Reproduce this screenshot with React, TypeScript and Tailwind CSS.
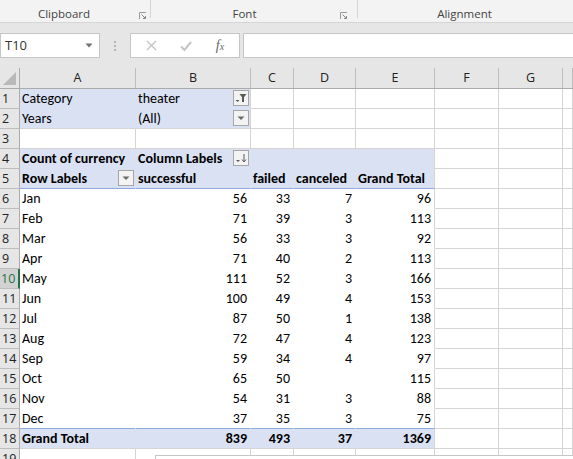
import React from "react";

const BLUE = "bg-[#d9e1f2]";
const WHITE = "bg-white";
const BR_GRID = "border-r-[#d4d4d4]";
const BR_BLUE = "border-r-[#d9e1f2]";
const BR_WHITE = "border-r-white";
const BB_GRID = "border-b-[#d4d4d4]";
const BB_BLUE = "border-b-[#d9e1f2]";
const BB_WHITE = "border-b-white";
const BB_LINE = "border-b-[#8ea9db]";

const W = ["w-[116px]", "w-[115px]", "w-[43px]", "w-[62px]", "w-[79px]", "w-[64px]", "w-[64px]", "flex-1"];
const LETTERS = ["A", "B", "C", "D", "E", "F", "G", ""];

type CellSpec = {
  text?: string;
  bold?: boolean;
  right?: boolean;
  bg?: string;
  br?: string;
  bb?: string;
  btn?: React.ReactNode;
};

const Btn = ({ children }: { children: React.ReactNode }) => (
  <div className="absolute right-[1px] top-[1px] w-[16px] h-[16px] border border-[#a6a6a6] bg-[#f3f3f3] flex items-center justify-center">
    {children}
  </div>
);

const FilterIcon = () => (
  <Btn>
    <svg width="14" height="14" viewBox="0 0 14 14">
      <path d="M1.5 9h4l-2 2z" fill="#595959" />
      <path d="M5.5 3h7l-2.5 3.2V11H8V6.2z" fill="#595959" />
    </svg>
  </Btn>
);

const DropIcon = () => (
  <Btn>
    <svg width="14" height="14" viewBox="0 0 14 14">
      <path d="M3.5 5.5h7l-3.5 3.5z" fill="#6b6b6b" />
    </svg>
  </Btn>
);

const SortIcon = () => (
  <Btn>
    <svg width="14" height="14" viewBox="0 0 14 14">
      <path d="M2 9h4l-2 2z" fill="#595959" />
      <path d="M10 3v8" stroke="#595959" strokeWidth="1" />
      <path d="M8 8.5l2 2.5 2-2.5" stroke="#595959" strokeWidth="1" fill="none" />
    </svg>
  </Btn>
);

const normal = (): CellSpec => ({});

const months: [string, number, number, number | null, number][] = [
  ["Jan", 56, 33, 7, 96],
  ["Feb", 71, 39, 3, 113],
  ["Mar", 56, 33, 3, 92],
  ["Apr", 71, 40, 2, 113],
  ["May", 111, 52, 3, 166],
  ["Jun", 100, 49, 4, 153],
  ["Jul", 87, 50, 1, 138],
  ["Aug", 72, 47, 4, 123],
  ["Sep", 59, 34, 4, 97],
  ["Oct", 65, 50, null, 115],
  ["Nov", 54, 31, 3, 88],
  ["Dec", 37, 35, 3, 75],
];

function buildRows(): CellSpec[][] {
  const rows: CellSpec[][] = [];
  const rest = (n: number) => Array.from({ length: n }, normal);
  rows.push([
    { text: "Category", bg: BLUE, br: BR_BLUE, bb: BB_BLUE },
    { text: "theater", bg: BLUE, br: BR_GRID, bb: BB_BLUE, btn: <FilterIcon /> },
    ...rest(6),
  ]);
  rows.push([
    { text: "Years", bg: BLUE, br: BR_BLUE, bb: BB_GRID },
    { text: "(All)", bg: BLUE, br: BR_GRID, bb: BB_GRID, btn: <DropIcon /> },
    ...rest(6),
  ]);
  rows.push(rest(8));
  rows.push([
    { text: "Count of currency", bold: true, bg: BLUE, br: BR_BLUE, bb: BB_BLUE },
    { text: "Column Labels", bold: true, bg: BLUE, br: BR_BLUE, bb: BB_BLUE, btn: <SortIcon /> },
    { bg: BLUE, br: BR_BLUE, bb: BB_BLUE },
    { bg: BLUE, br: BR_BLUE, bb: BB_BLUE },
    { bg: BLUE, br: BR_GRID, bb: BB_BLUE },
    ...rest(3),
  ]);
  rows.push([
    { text: "Row Labels", bold: true, bg: BLUE, br: BR_BLUE, bb: BB_LINE, btn: <DropIcon /> },
    { text: "successful", bold: true, bg: BLUE, br: BR_BLUE, bb: BB_LINE },
    { text: "failed", bold: true, bg: BLUE, br: BR_BLUE, bb: BB_LINE },
    { text: "canceled", bold: true, bg: BLUE, br: BR_BLUE, bb: BB_LINE },
    { text: "Grand Total", bold: true, bg: BLUE, br: BR_GRID, bb: BB_LINE },
    ...rest(3),
  ]);
  months.forEach(([m, s, f, c, t], i) => {
    const bb = i === months.length - 1 ? BB_LINE : BB_WHITE;
    rows.push([
      { text: m, bg: WHITE, br: BR_WHITE, bb },
      { text: String(s), right: true, bg: WHITE, br: BR_WHITE, bb },
      { text: String(f), right: true, bg: WHITE, br: BR_WHITE, bb },
      { text: c === null ? "" : String(c), right: true, bg: WHITE, br: BR_WHITE, bb },
      { text: String(t), right: true, bg: WHITE, br: BR_GRID, bb },
      ...rest(3),
    ]);
  });
  rows.push([
    { text: "Grand Total", bold: true, bg: BLUE, br: BR_BLUE, bb: BB_GRID },
    { text: "839", bold: true, right: true, bg: BLUE, br: BR_BLUE, bb: BB_GRID },
    { text: "493", bold: true, right: true, bg: BLUE, br: BR_BLUE, bb: BB_GRID },
    { text: "37", bold: true, right: true, bg: BLUE, br: BR_BLUE, bb: BB_GRID },
    { text: "1369", bold: true, right: true, bg: BLUE, br: BR_GRID, bb: BB_GRID },
    ...rest(3),
  ]);
  rows.push(rest(8));
  return rows;
}

const Launcher = () => (
  <svg width="8" height="8" viewBox="0 0 8 8" className="block">
    <path d="M0.5 7V0.5H7" stroke="#9a9a9a" strokeWidth="1" fill="none" />
    <path d="M2.5 2.5L6.5 6.5M4 6.5h2.5V4" stroke="#8a8a8a" strokeWidth="1" fill="none" />
  </svg>
);

export default function App() {
  const rows = buildRows();
  return (
    <div className="relative w-[573px] h-[459px] overflow-hidden bg-white">
      {/* Ribbon */}
      <div className="h-[23px] bg-[#f3f3f3] border-b border-[#d5d5d5] flex font-['Open_Sans',sans-serif] text-[11.5px] text-[#444]">
        <div className="w-[150px] relative flex items-center justify-center pr-[22px] pt-[5px]">
          <span>Clipboard</span>
          <div className="absolute left-[139px] top-[12px]"><Launcher /></div>
        </div>
        <div className="w-[1px] h-[18px] bg-[#d5d5d5]" />
        <div className="w-[206px] relative flex items-center justify-center pr-[19px] pt-[5px]">
          <span>Font</span>
          <div className="absolute left-[189px] top-[12px]"><Launcher /></div>
        </div>
        <div className="w-[1px] h-[18px] bg-[#d5d5d5]" />
        <div className="flex-1 flex items-center justify-center pr-[2px] pt-[5px]">
          <span>Alignment</span>
        </div>
      </div>

      {/* Formula bar area */}
      <div className="h-[45px] bg-[#e6e6e6] flex items-start pt-[10px]">
        <div className="w-[100px] h-[25px] bg-white border border-[#c6c6c6] flex items-center pl-[4px] pr-[6px] font-['Open_Sans',sans-serif] text-[13px] text-[#333]">
          <span className="flex-1">T10</span>
          <svg width="8" height="5" viewBox="0 0 8 5">
            <path d="M0.5 0.5h7l-3.5 4z" fill="#707070" />
          </svg>
        </div>
        <div className="w-[30px] h-[25px] flex flex-col items-center justify-center gap-[2px]">
          <div className="w-[2px] h-[2px] bg-[#b5b5b5]" />
          <div className="w-[2px] h-[2px] bg-[#b5b5b5]" />
          <div className="w-[2px] h-[2px] bg-[#b5b5b5]" />
        </div>
        <div className="w-[110px] h-[25px] bg-white border border-[#c6c6c6] flex items-center">
          <div className="w-[40px] flex justify-center">
            <svg width="11" height="11" viewBox="0 0 11 11">
              <path d="M1 1l9 9M10 1l-9 9" stroke="#c4c4c4" strokeWidth="1.4" />
            </svg>
          </div>
          <div className="w-[30px] flex justify-center">
            <svg width="12" height="10" viewBox="0 0 12 10">
              <path d="M1 5.5l3.5 3.5L11 1" stroke="#c4c4c4" strokeWidth="2" fill="none" />
            </svg>
          </div>
          <div className="w-[38px] flex justify-center font-['Liberation_Serif',serif] italic text-[#666] text-[14px] leading-none">
            <span>f</span><span className="text-[10px] mt-[3px]">x</span>
          </div>
        </div>
        <div className="ml-[3px] flex-1 h-[25px] bg-white border border-[#c6c6c6] border-r-0" />
      </div>

      {/* Column headers */}
      <div className="flex h-[21px] bg-[#e6e6e6] border-b border-[#ababab] font-['Open_Sans',sans-serif] text-[12.5px] text-[#222]">
        <div className="w-[20px] h-[20px] border-r border-[#ababab] relative">
          <svg width="16" height="16" viewBox="0 0 16 16" className="absolute left-[1px] top-[2px]">
            <path d="M15 2v13H2z" fill="#b9b9b9" />
          </svg>
        </div>
        {LETTERS.map((l, i) => (
          <div key={i} className={`${W[i]} h-[20px] border-r border-[#bdbdbd] flex items-center justify-center pt-[1px]`}>
            {l}
          </div>
        ))}
      </div>

      {/* Rows */}
      <div className="font-['Carlito','Lato',sans-serif] text-[14px] text-black">
        {rows.map((cells, r) => {
          const selected = r + 1 === 10;
          return (
            <div key={r} className="flex h-[20px]">
              <div
                className={
                  selected
                    ? "w-[20px] h-[20px] bg-[#d2d2d2] border-b border-[#bdbdbd] border-r-2 border-r-[#217346] text-[#217346] font-['Open_Sans',sans-serif] text-[12.5px] leading-[19px] pl-[1px]"
                    : "w-[20px] h-[20px] bg-[#e6e6e6] border-b border-[#bdbdbd] border-r border-r-[#ababab] text-[#222] font-['Open_Sans',sans-serif] text-[12.5px] leading-[19px] pl-[2px]"
                }
              >
                {r + 1}
              </div>
              {cells.map((c, i) => (
                <div
                  key={i}
                  className={`${W[i]} relative h-[20px] border-r border-b ${c.bg ?? WHITE} ${c.br ?? BR_GRID} ${c.bb ?? BB_GRID} ${
                    c.right ? "text-right pr-[3px]" : "text-left pl-[2px]"
                  } ${c.bold ? "font-bold" : ""} whitespace-nowrap leading-[20px]`}
                >
                  {c.text}
                  {c.btn}
                </div>
              ))}
            </div>
          );
        })}
      </div>

      {/* overlay box at bottom */}
      <div className="absolute left-[155px] top-[455px] right-0 bottom-0 bg-white border-l border-t border-[#c6c6c6]" />
    </div>
  );
}
